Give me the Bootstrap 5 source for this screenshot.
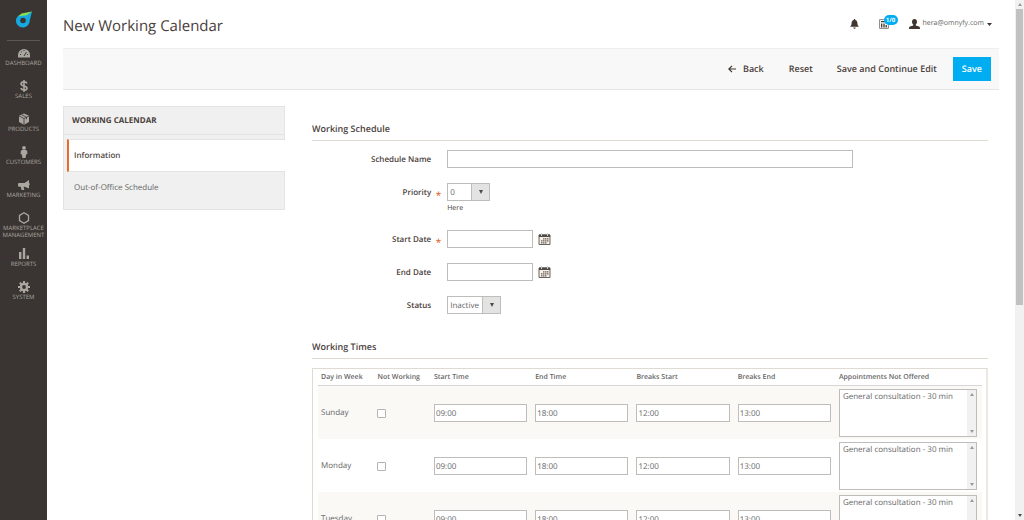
<!DOCTYPE html>
<html lang="en">
<head>
<meta charset="utf-8">
<meta name="viewport" content="width=device-width, initial-scale=1">
<title>New Working Calendar</title>
<link href="https://cdn.jsdelivr.net/npm/bootstrap@5.3.0/dist/css/bootstrap.min.css" rel="stylesheet">
<style>
body{font-family:"Open Sans",sans-serif;font-size:8px;line-height:10px;color:#4a403a;background:#fff;text-rendering:geometricPrecision}
input,select,button{text-rendering:inherit}
a{color:inherit;text-decoration:none}
.side-menu{width:47px;background:#3a3532;color:#aaa6a0;font-size:6px;line-height:7px;text-align:center}
.brand-mark{height:41px;margin:0 7px 6px;padding-top:10px;border-bottom:1px solid #5d5855}
.side-menu a{height:33px;text-transform:uppercase;display:flex;flex-direction:column;align-items:center;white-space:nowrap}
.side-menu a svg{width:12px;height:12px;margin-bottom:1px;flex:none}
.side-menu a.two-line{height:36px}
.page-area{padding:0 16px;min-width:0}
.page-title{font-size:15px;line-height:20px;font-weight:400;padding-top:3px}
.top-line{height:48px;padding:0 7px 0 0}
.user-tools{gap:20px;font-size:7px}
.user-tools button{border:0;background:none;padding:0;display:flex;gap:3px;align-items:center;color:#666}
.count-pill{position:absolute;left:5px;top:-4px;background:#00adf0;color:#fff;border-radius:5px;font-size:6px;font-weight:700;line-height:10px;width:14px;text-align:center}
.action-bar{height:42px;background:#f8f8f8;border-top:1px solid #eee;border-bottom:1px solid #e6e6e6;padding-right:8px}
.action-bar button{border:0;background:none;border-radius:0;font-size:9px;line-height:14px;font-weight:600;color:#4a403a;padding:5px 8px;height:24px}
.action-bar .btn-back{gap:7px;margin-right:1px}
.action-bar .btn-save{background:#00adf0;color:#fff;padding:5px 9px}
.tab-panel{width:222px;flex:none;background:#f0f0f0;border:1px solid #e3e3e3;height:104px}
.tab-panel h2{font-size:8px;line-height:10px;font-weight:700;margin:0;padding:9px 8px 8px;border-bottom:1px solid #e3e3e3;height:28px}
.tab-panel a{display:block;margin-left:3px;padding:11px 7px 10px;line-height:10px;height:32px;color:#666}
.tab-panel a.current{background:#fff;border-left:2px solid #eb6a30;border-bottom:1px solid #e3e3e3;border-top:1px solid #e3e3e3;padding:11px 5px 10px;margin:4px -1px 0 3px;font-weight:600;color:#524a44;height:33px}
.form-area{margin-left:27px;margin-right:11px;padding-top:16px}
.section-head{font-size:9px;line-height:12px;font-weight:600;margin:0;padding-top:1px;border-bottom:1px solid #dfdad2;height:19px}
.form-line{display:flex;margin-bottom:15px}
.section-head + .form-line{margin-top:9px}
.form-line + .section-head{margin-top:26px}
.form-line > label{width:20%;flex:none;padding-right:16px;text-align:right;font-weight:600;line-height:20px;height:18px;position:relative}
.form-line > label.needed::after{content:"*";position:absolute;right:6px;top:2px;color:#e2703f;font-size:10px}
.hint{font-size:7px;line-height:12px;padding-top:2px}
.plain-box{height:18px;border:1px solid #bfbdb9;border-radius:0;padding:1px 1px 0;font-size:8px;color:#666;background:#fff;display:block}
select.plain-box{appearance:none;padding:1px 2px 0}
.name-box{width:60%}
.pick{position:relative;display:block}
.pick-short{width:43px}
.pick-long{width:54px}
.pick::after{content:"";position:absolute;right:1px;top:1px;width:18px;height:16px;background:#e3e3e3 linear-gradient(#bfbdb9,#bfbdb9) 0 0/1px 100% no-repeat;pointer-events:none}
.pick::before{content:"";position:absolute;z-index:1;right:7px;top:7px;border:2px solid transparent;border-top:4px solid #514943;border-bottom:0;pointer-events:none}
.date-box{width:86px}
.cal-btn{border:0;background:none;padding:0;margin-left:5px;height:18px;display:flex;align-items:center}
.times-frame{margin-top:9px;border:1px solid #dfdad2;border-width:1px 2px 1px 1px;border-right-color:#ece8e1;padding:0 4px 0 5px}
.times{width:100%;table-layout:fixed;color:#666}
.times th{font-weight:600;font-size:7px;line-height:10px;padding:4px 0 1px 3px;height:16px;border-bottom:1px solid #d6d6d6;white-space:nowrap}
.times td{padding:3px 5px 2px 3px;height:53px;vertical-align:middle}
.times tbody tr:nth-child(odd){background:#faf9f6}
.times input[type=checkbox]{appearance:none;width:9px;height:9px;border:1px solid #b5b3af;border-radius:1px;background:#fff;display:block;margin:1px 0 0}
.multi{position:relative;height:48px}
.multi select{width:100%;height:48px;border:1px solid #bfbdb9;border-radius:0;padding:1px 0;overflow:hidden;font-size:8px;color:#666;background:#fff;scrollbar-width:none}
.multi option{padding:0 3px;line-height:11px;min-height:11px}
.bar{background:#f1f1f1;position:relative}
.bar::before,.bar::after{content:"";position:absolute;left:50%;margin-left:-2px;border:2px solid transparent}
.bar::before{top:3px;border-bottom:3px solid #999;border-top:0}
.bar::after{bottom:3px;border-top:3px solid #999;border-bottom:0}
.multi .bar{position:absolute;right:1px;top:1px;bottom:1px;width:9px}
.page-bar{width:9px;flex:none;padding:9px 1px 0}
.page-bar::after{border-top-color:#505050}
.page-bar i{display:block;height:58%;background:#c1c1c1}
</style>
</head>
<body>
<div class="d-flex vh-100 overflow-hidden">
<nav class="side-menu flex-shrink-0" aria-label="Main">
  <div class="brand-mark d-flex justify-content-center">
    <svg width="18" height="18" viewBox="0 0 18 18" aria-label="Omnyfy"><path d="M17 1.500 14.600 11A6.800 6.800 0 1 1 3.600 5.400L10 4.500Z" fill="#16a9e1"/><path d="M17 1.500 6.500 3.400 3.300 6.200 11.500 5.200Z" fill="#8be04e"/><circle cx="8" cy="10.500" r="2.800" fill="#3a3532"/></svg>
  </div>
  <a href="#"><svg viewBox="0 0 12 12"><path fill="currentColor" d="M0 10.500V8a6 6 0 0 1 12 0v2.500Z"/><path d="m6 9 2.500-4M2 7.500h1M3 4.500l.8.600M6 3v1M10 7.500H9" stroke="#3a3532"/></svg>Dashboard</a>
  <a href="#"><svg viewBox="0 0 12 12" fill="none" stroke="currentColor" stroke-width="1.600"><path d="M9 3.500C8 1 3 1.500 3 4c0 2.500 6 1.500 6 4.200C9 10.500 4 10.800 2.800 8.200M6 0v12"/></svg>Sales</a>
  <a href="#"><svg viewBox="0 0 12 12"><path fill="currentColor" d="m6 .5 5 2.200v6.300L6 11.700 1 9V2.700Z"/><path fill="none" stroke="#3a3532" stroke-width=".8" d="m1 3 5 2.500L11 3M6 5.500v6M3.500 1.700l5 2.500v2"/></svg>Products</a>
  <a href="#"><svg viewBox="0 0 12 12" fill="currentColor"><circle cx="6" cy="1.900" r="1.900"/><path d="M4 4h4l1.300 1.200v3H8.200L7.500 12h-3L3.800 8.200H2.700v-3Z"/></svg>Customers</a>
  <a href="#"><svg viewBox="0 0 12 12" fill="currentColor"><path d="M11 1v8.500L6.500 7.800H5.600L6.300 11H3.500L2.800 7.800H1A1 1 0 0 1 0 6.800V5a1 1 0 0 1 1-1h5.500ZM11.400 4.200h.6v2h-.6Z"/></svg>Marketing</a>
  <a href="#" class="two-line"><svg viewBox="0 0 12 12" fill="none" stroke="currentColor" stroke-width="1.300"><path d="m6 .8 4.500 2.600v5.200L6 11.200 1.500 8.600V3.400Z"/></svg>Marketplace<br>Management</a>
  <a href="#"><svg viewBox="0 0 12 12" fill="currentColor"><path d="M1 4h2.400v7H1ZM4.800 0h2.400v11H4.800ZM8.600 7.500H11V11H8.600Z"/></svg>Reports</a>
  <a href="#"><svg viewBox="0 0 12 12"><g stroke="currentColor" stroke-width="2.200"><path d="M6 0v12M0 6h12M1.800 1.800l8.400 8.400M10.200 1.800l-8.400 8.400"/></g><circle cx="6" cy="6" r="4.200" fill="currentColor"/><circle cx="6" cy="6" r="1.900" fill="#3a3532"/></svg>System</a>
</nav>

<main class="page-area flex-grow-1">
  <header class="top-line d-flex justify-content-between align-items-center">
    <h1 class="page-title m-0">New Working Calendar</h1>
    <div class="user-tools d-flex align-items-center">
      <button type="button" aria-label="Notifications"><svg width="9" height="10" viewBox="0 0 9 10"><path fill="#41362f" d="M4.500 0c.6 0 .8.400.8.900C7 1.400 7.500 3 7.500 5c0 1.200.7 1.800 1.400 2.800H.1C.8 6.800 1.500 6.200 1.500 5c0-2 .5-3.600 2.200-4.100 0-.5.200-.9.800-.9M3.300 8.500h2.400a1.200 1.200 0 0 1-2.400 0"/></svg></button>
      <button type="button" class="position-relative" aria-label="Tasks"><svg width="10" height="10" viewBox="0 0 10 10"><path d="M.6.600h8.800v8.800H.6Z" fill="none" stroke="#8a847e"/><path d="M2 2.700h5M2.700 4.500v4M5 4.500v4M7.200 6v2.500" fill="none" stroke="#41362f" stroke-width="1.300"/></svg><span class="count-pill">1/0</span></button>
      <button type="button"><svg width="11" height="10" viewBox="0 0 11 10"><path fill="#41362f" d="M5.500 0C7.200 0 8 1.200 8 2.700 8 4 7.500 4.800 6.800 5.500v1L10 7.500c.7.300 1 .8 1 2.500H0c0-1.700.3-2.200 1-2.500l3.200-1v-1C3.500 4.800 3 4 3 2.700 3 1.200 3.800 0 5.500 0"/></svg>hera@omnyfy.com<svg width="5" height="3" viewBox="0 0 5 3"><path fill="#41362f" d="M0 0h5L2.500 3Z"/></svg></button>
    </div>
  </header>

  <div class="action-bar d-flex justify-content-end align-items-center">
    <button type="button" class="btn-back d-flex align-items-center"><svg width="8" height="8" viewBox="0 0 8 8"><path d="M8 4H1M4 .8.800 4 4 7.200" fill="none" stroke="#41362f" stroke-width="1.200"/></svg>Back</button>
    <button type="button" class="ms-2">Reset</button>
    <button type="button" class="ms-2">Save and Continue Edit</button>
    <button type="button" class="btn-save ms-2">Save</button>
  </div>

  <div class="d-flex pt-3">
    <aside class="tab-panel">
      <h2>WORKING CALENDAR</h2>
      <a href="#" class="current">Information</a>
      <a href="#">Out-of-Office Schedule</a>
    </aside>

    <form class="form-area flex-grow-1">
      <h2 class="section-head">Working Schedule</h2>
      <div class="form-line"><label for="name">Schedule Name</label><input id="name" type="text" class="plain-box name-box"></div>
      <div class="form-line"><label for="prio" class="needed">Priority</label><div><span class="pick pick-short"><select id="prio" class="plain-box w-100"><option>0</option></select></span><div class="hint">Here</div></div></div>
      <div class="form-line"><label for="start" class="needed">Start Date</label><input id="start" type="text" class="plain-box date-box"><button type="button" class="cal-btn" aria-label="Pick start date"><svg width="13" height="12" viewBox="0 0 13 12"><use href="#cal"/></svg></button></div>
      <div class="form-line"><label for="end">End Date</label><input id="end" type="text" class="plain-box date-box"><button type="button" class="cal-btn" aria-label="Pick end date"><svg width="13" height="12" viewBox="0 0 13 12"><use href="#cal"/></svg></button></div>
      <div class="form-line"><label for="status">Status</label><span class="pick pick-long"><select id="status" class="plain-box w-100"><option>Inactive</option></select></span></div>

      <h2 class="section-head">Working Times</h2>
      <div class="times-frame">
        <table class="times">
          <colgroup><col style="width:8.500%"><col style="width:8.500%"><col style="width:15.250%"><col style="width:15.250%"><col style="width:15.250%"><col style="width:15.250%"><col></colgroup>
          <thead><tr><th>Day in Week</th><th>Not Working</th><th>Start Time</th><th>End Time</th><th>Breaks Start</th><th>Breaks End</th><th>Appointments Not Offered</th></tr></thead>
          <tbody id="days"></tbody>
        </table>
      </div>
    </form>
  </div>
</main>
<div class="bar page-bar" aria-hidden="true"><i></i></div>
</div>

<svg width="0" height="0" class="position-absolute"><defs><g id="cal"><path d="M1 2h11v9.500H1Z" fill="#f4efe9" stroke="#6b625b"/><path d="M1 1.500h11V4H1Z" fill="#514943"/><path d="M3.500 0v3M9.500 0v3" stroke="#ccc"/><path d="M5 5.800h6M3 7.800h8M3 9.800h6" stroke="#6b625b" stroke-width="1.300" stroke-dasharray="1.500 .5"/></g></defs></svg>

<script>
document.getElementById('days').innerHTML = ['Sunday','Monday','Tuesday','Wednesday','Thursday','Friday','Saturday'].map(function (d) {
  var times = [['start time','09:00'],['end time','18:00'],['breaks start','12:00'],['breaks end','13:00']].map(function (t) {
    return '<td><input type="text" class="plain-box w-100" aria-label="' + d + ' ' + t[0] + '" value="' + t[1] + '"></td>';
  }).join('');
  return '<tr><td>' + d + '</td><td><input type="checkbox" aria-label="' + d + ' not working"></td>' + times +
    '<td><div class="multi"><select multiple aria-label="' + d + ' appointments not offered"><option>General consultation - 30 min</option></select><span class="bar"></span></div></td></tr>';
}).join('');
</script>
<script src="https://cdn.jsdelivr.net/npm/bootstrap@5.3.0/dist/js/bootstrap.bundle.min.js"></script>
</body>
</html>
